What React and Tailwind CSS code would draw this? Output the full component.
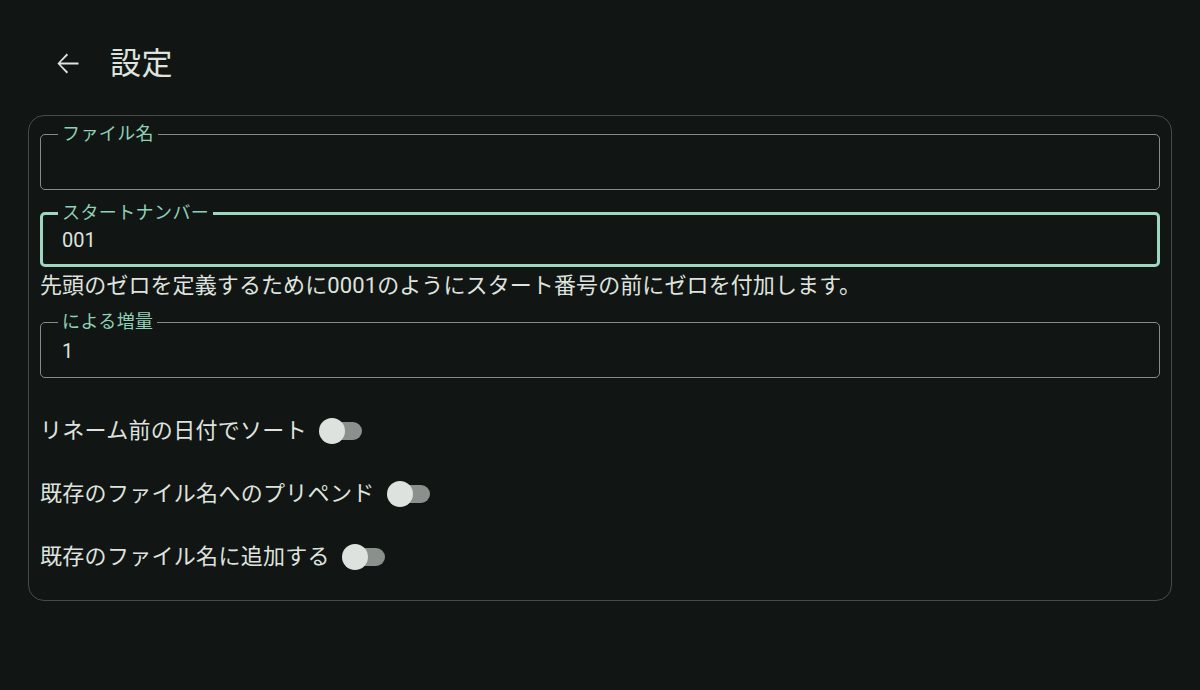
import { useState } from "react";

// Outlined text field, label sits in the top border notch
const OutlinedField = ({ label, value, focused = false, onChange }) => {
  return (
    <fieldset
      className={
        focused
          ? "rounded-[5px] border-[3px] border-[#9fd6bf] px-[15px]"
          : "rounded-[5px] border border-[#858b88] px-[17px]"
      }
    >
      <legend className="px-[4px] text-[18px] leading-[20px] tracking-[0.4px] text-[#8fd1b6]">
        {label}
      </legend>
      <div className={focused ? "h-[41px] pt-[5px]" : "h-[45px] pt-[7px]"}>
        <input
          type="text"
          value={value}
          onChange={onChange}
          className="w-full bg-transparent pl-[4px] text-[20px] leading-[24px] text-[#dfe3df] outline-none"
        />
      </div>
    </fieldset>
  );
};

const Toggle = ({ checked, onClick }) => (
  <button type="button" onClick={onClick} className="relative flex h-[26px] w-[43px] items-center">
    <span
      className={
        checked
          ? "ml-[7px] h-[18px] w-[36px] rounded-full bg-[#8fd1b6]"
          : "ml-[7px] h-[18px] w-[36px] rounded-full bg-[#8a918d]"
      }
    />
    <span
      className={
        checked
          ? "absolute left-[17px] top-0 h-[26px] w-[26px] rounded-full bg-[#dde2de]"
          : "absolute left-0 top-0 h-[26px] w-[26px] rounded-full bg-[#dde2de]"
      }
    />
  </button>
);

const App = () => {
  const [fileName, setFileName] = useState("");
  const [start, setStart] = useState("001");
  const [step, setStep] = useState("1");
  const [toggles, setToggles] = useState({ sort: false, prepend: false, append: false });

  const flip = (key) => setToggles({ ...toggles, [key]: !toggles[key] });

  const rows = [
    { key: "sort", label: "リネーム前の日付でソート" },
    { key: "prepend", label: "既存のファイル名へのプリペンド" },
    { key: "append", label: "既存のファイル名に追加する" },
  ];

  return (
    <div className="min-h-screen bg-[#111614] font-['Roboto','Noto_Sans_CJK_JP',sans-serif] text-[#dfe3df]">
      {/* Header */}
      <div className="flex items-center gap-[26px] pl-[51px] pt-[47px]">
        <svg width="33" height="33" viewBox="0 0 24 24" fill="#dfe3df">
          <path d="M20 11.3H6.9l5.5-5.5-1-1L4.7 12l6.7 7.2 1-1-5.5-5.5H20z" />
        </svg>
        <h1 className="text-[31px] leading-[33px] tracking-[0.5px]">設定</h1>
      </div>

      {/* Settings card */}
      <div className="mx-[28px] mt-[35px] rounded-[16px] border border-[#464b48] px-[11px] pb-[23px] pt-[8px]">
        <OutlinedField label="ファイル名" value={fileName} onChange={(e) => setFileName(e.target.value)} />

        <div className="mt-[13px]">
          <OutlinedField
            label="スタートナンバー"
            value={start}
            focused
            onChange={(e) => setStart(e.target.value)}
          />
        </div>

        <p className="mt-[5px] text-[22px] leading-[28px] tracking-[0.1px]">
          先頭のゼロを定義するために0001のようにスタート番号の前にゼロを付加します。
        </p>

        <div className="mt-[12px]">
          <OutlinedField label="による増量" value={step} onChange={(e) => setStep(e.target.value)} />
        </div>

        {/* Switch rows */}
        <div className="mt-[33px] flex flex-col gap-[23px]">
          {rows.map((row) => (
            <div key={row.key} className="flex h-[40px] items-center gap-[12px]">
              <span className="text-[22px] leading-[28px] tracking-[0.3px]">{row.label}</span>
              <Toggle checked={toggles[row.key]} onClick={() => flip(row.key)} />
            </div>
          ))}
        </div>
      </div>
    </div>
  );
};

export default App;
